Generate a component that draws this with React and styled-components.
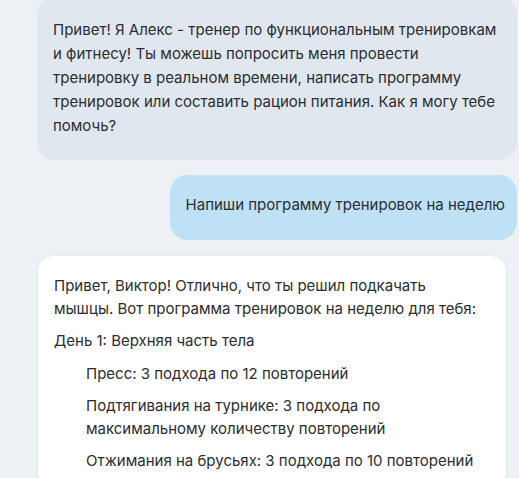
import React from 'react'
import styled, { createGlobalStyle } from 'styled-components'

const GlobalStyle = createGlobalStyle`
  html, body {
    margin: 0;
    padding: 0;
    height: 100%;
    overflow: hidden;
    background-color: #edf1f5;
  }
  body {
    font-family: Inter, "Open Sans", sans-serif;
    font-size: 15px;
    color: #2b2d31;
  }
`

const Chat = styled.main`
  display: flex;
  flex-direction: column;
  gap: 15px;
  padding: 0 2px 0 37px;
  margin-top: -4px;
`

const Bubble = styled.div`
  box-sizing: border-box;
  border-radius: 18px;
  line-height: 24px;
  background-color: ${props => props.$tone === 'user' ? '#bfe1f6' : '#e1e7ef'};
  align-self: ${props => props.$tone === 'user' ? 'flex-end' : 'stretch'};
  padding: ${props => props.$tone === 'user' ? '18px 12px 23px 16px' : '22px 16px'};
`

const Answer = styled.div`
  background-color: #ffffff;
  border: 1px solid #e3e8ee;
  border-radius: 16px;
  margin-right: 10px;
  padding: 19px 27px 19px 16px;
  line-height: 22.5px;
`

const Paragraph = styled.p`
  margin: 0 0 10px;
`

const Exercises = styled.ul`
  list-style: none;
  margin: 0;
  padding-left: 32px;
`

const Exercise = styled.li`
  margin-bottom: 10px;
`

const exercises = [
  'Пресс: 3 подхода по 12 повторений',
  'Подтягивания на турнике: 3 подхода по максимальному количеству повторений',
  'Отжимания на брусьях: 3 подхода по 10 повторений',
]

export default function App() {
  return (
    <>
      <GlobalStyle />
      <Chat>
        <Bubble>
          Привет! Я Алекс - тренер по функциональным тренировкам и фитнесу! Ты можешь
          попросить меня провести тренировку в реальном времени, написать программу
          тренировок или составить рацион питания. Как я могу тебе помочь?
        </Bubble>
        <Bubble $tone="user">
          Напиши программу тренировок на неделю
        </Bubble>
        <Answer>
          <Paragraph>
            Привет, Виктор! Отлично, что ты решил подкачать мышцы. Вот программа
            тренировок на неделю для тебя:
          </Paragraph>
          <Paragraph>День 1: Верхняя часть тела</Paragraph>
          <Exercises>
            {exercises.map(item => (
              <Exercise key={item}>{item}</Exercise>
            ))}
          </Exercises>
        </Answer>
      </Chat>
    </>
  )
}
